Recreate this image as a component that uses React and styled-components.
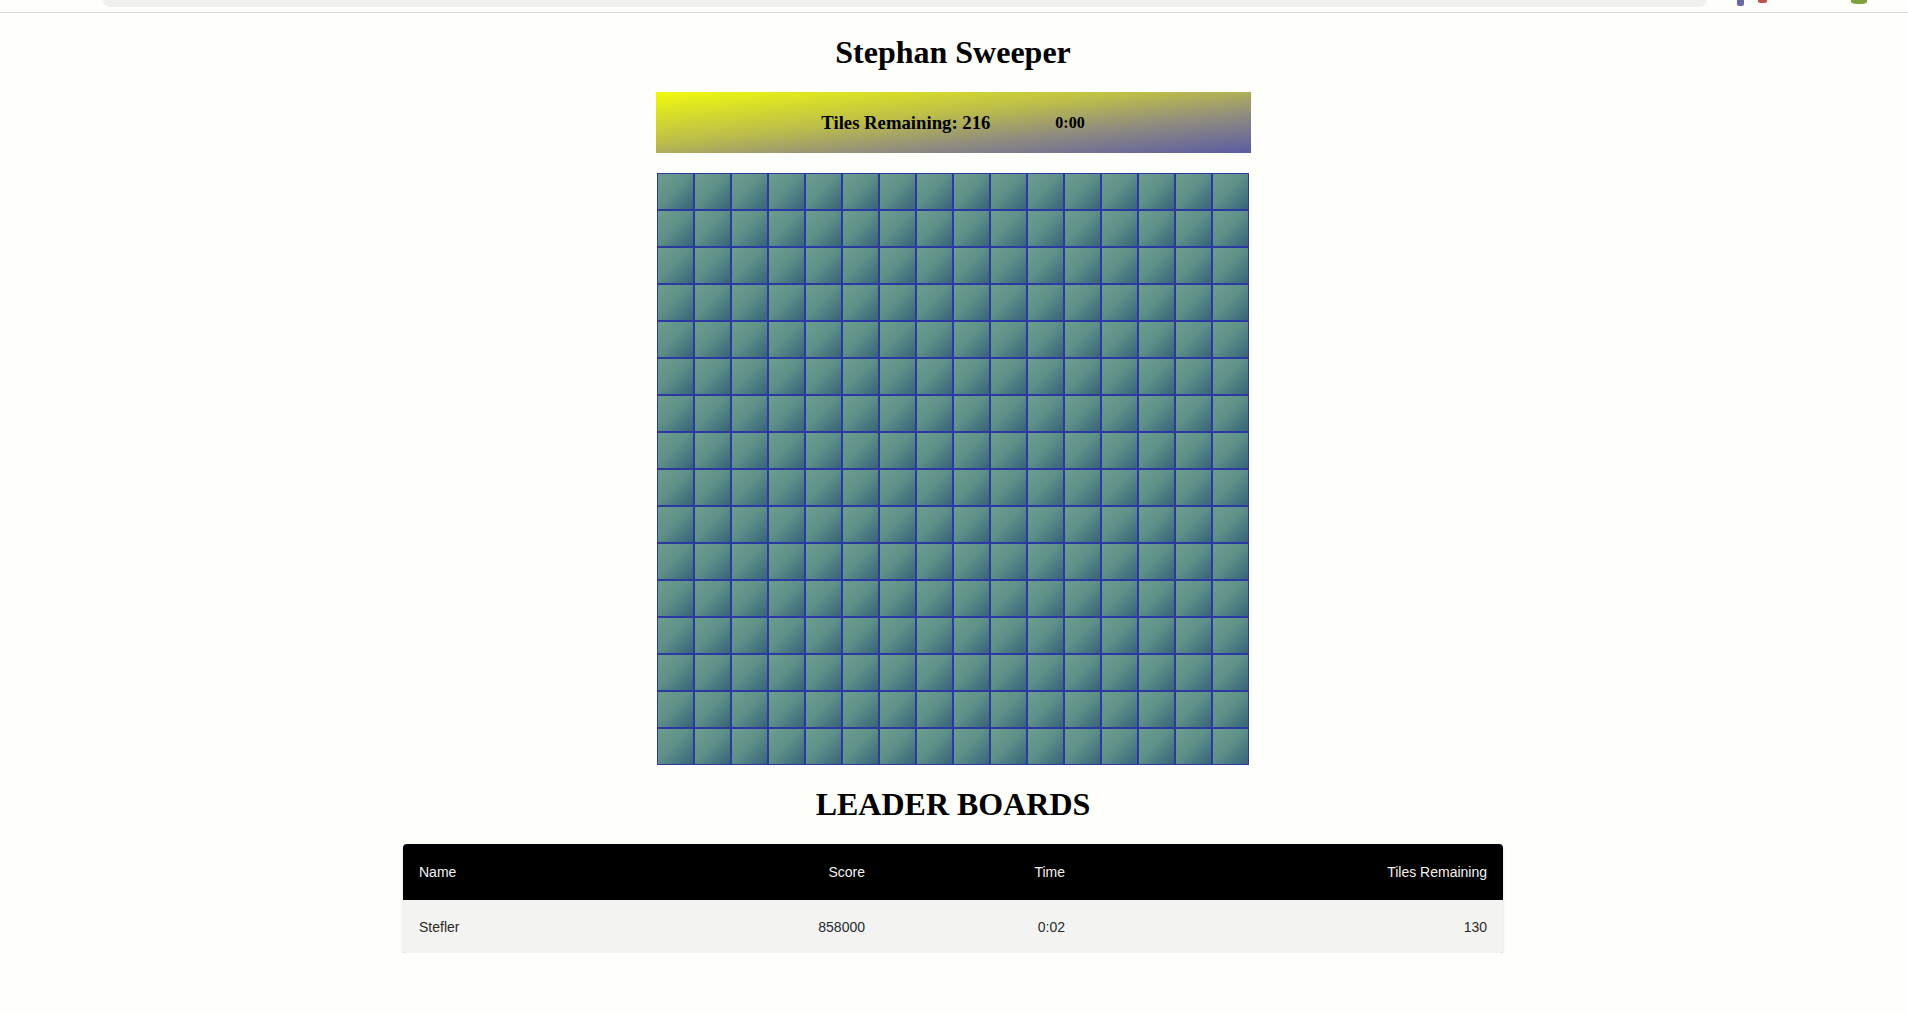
import React from 'react'
import styled, { createGlobalStyle } from 'styled-components'

const GlobalStyle = createGlobalStyle`
  html, body {
    margin: 0;
    padding: 0;
    background: #fefefb;
    font-family: "Liberation Serif", "Times New Roman", serif;
  }
`;

const Chrome = styled.div`
  height: 12px;
  border-bottom: 1px solid #d9d9d6;
  display: flex;
  align-items: flex-start;
  padding: 0 0 0 103px;
`;
const AddressBar = styled.div`
  width: 1604px;
  height: 7px;
  background: #f0f0ec;
  border-radius: 0 0 8px 8px;
`;
const ChromeIcons = styled.div`
  display: flex;
  align-items: flex-start;
  gap: 14px;
  margin-left: 30px;
`;
const ChromeDot = styled.span`
  display: block;
  width: ${({ $w }) => $w}px;
  height: ${({ $h }) => $h}px;
  background: ${({ $c }) => $c};
  border-radius: ${({ $round }) => ($round ? '0 0 50% 50%' : '0 0 2px 2px')};
  margin-left: ${({ $ml }) => $ml || 0}px;
`;

const Page = styled.div`
  display: flex;
  flex-direction: column;
  align-items: center;
  padding-right: 2px;
`;
const Title = styled.h1`
  font-size: 32px;
  font-weight: 700;
  margin: 21px 0;
  line-height: 37px;
  color: #000;
`;
const StatusBar = styled.div`
  width: 595px;
  height: 61px;
  display: flex;
  align-items: center;
  justify-content: center;
  gap: 65px;
  background: linear-gradient(to bottom right, #f0fa0c 0%, #bcbd4a 42%, #908c7e 68%, #5b5ca4 100%);
`;
const Remaining = styled.h3`
  margin: 0;
  font-size: 18.72px;
  font-weight: 700;
  color: #000;
`;
const Timer = styled.h4`
  margin: 0;
  font-size: 16px;
  font-weight: 700;
  color: #000;
`;
const Board = styled.div`
  margin-top: 20px;
  display: grid;
  grid-template-columns: repeat(16, 37px);
  grid-auto-rows: 37px;
`;
const Tile = styled.div`
  box-sizing: border-box;
  border: 1px solid #2b3aa2;
  background: linear-gradient(135deg, #6d9d8e 0%, #5f9189 45%, #376479 100%);
  cursor: pointer;
`;
const Table = styled.table`
  width: 1100px;
  border-collapse: collapse;
  border-radius: 4px;
  overflow: hidden;
  box-shadow: 0 2px 1px -1px rgba(0,0,0,0.2), 0 1px 1px 0 rgba(0,0,0,0.14), 0 1px 3px 0 rgba(0,0,0,0.12);
  font-family: "Liberation Sans", Arial, sans-serif;
  font-size: 14px;
  table-layout: fixed;
`;
const HeadRow = styled.tr`
  background: #000;
`;
const Th = styled.th`
  height: 56px;
  padding: 0 16px;
  box-sizing: border-box;
  font-weight: 400;
  color: #f2f2f2;
  text-align: ${({ $align }) => $align || 'left'};
`;
const BodyRow = styled.tr`
  background: #f3f3f1;
`;
const Td = styled.td`
  height: 53px;
  padding: 0 16px;
  box-sizing: border-box;
  color: #2a2a2a;
  text-align: ${({ $align }) => $align || 'left'};
`;

const columns = [
  { key: 'name', label: 'Name', width: 278 },
  { key: 'score', label: 'Score', width: 200, align: 'right' },
  { key: 'time', label: 'Time', width: 200, align: 'right' },
  { key: 'tiles', label: 'Tiles Remaining', width: 422, align: 'right' },
];
const scores = [{ name: 'Stefler', score: 858000, time: '0:02', tiles: 130 }];

const App = () => {
  const tiles = Array.from({ length: 256 })
  return (
    <>
      <GlobalStyle />
      <Chrome>
        <AddressBar />
        <ChromeIcons>
          <ChromeDot $w={7} $h={6} $c="#6a6aa8" />
          <ChromeDot $w={9} $h={3} $c="#c25050" />
          <ChromeDot $w={16} $h={4} $c="#7ea33c" $round $ml={70} />
        </ChromeIcons>
      </Chrome>
      <Page>
        <Title>Stephan Sweeper</Title>
        <StatusBar>
          <Remaining>Tiles Remaining: 216</Remaining>
          <Timer>0:00</Timer>
        </StatusBar>
        <Board>
          {tiles.map((_, i) => <Tile key={i} />)}
        </Board>
        <Title>LEADER BOARDS</Title>
        <Table>
          <colgroup>
            {columns.map(c => <col key={c.key} style={{ width: c.width }} />)}
          </colgroup>
          <thead>
            <HeadRow>
              {columns.map(c => <Th key={c.key} $align={c.align}>{c.label}</Th>)}
            </HeadRow>
          </thead>
          <tbody>
            {scores.map((s, i) => (
              <BodyRow key={i}>
                {columns.map(c => <Td key={c.key} $align={c.align}>{s[c.key]}</Td>)}
              </BodyRow>
            ))}
          </tbody>
        </Table>
      </Page>
    </>
  )
}

export default App
